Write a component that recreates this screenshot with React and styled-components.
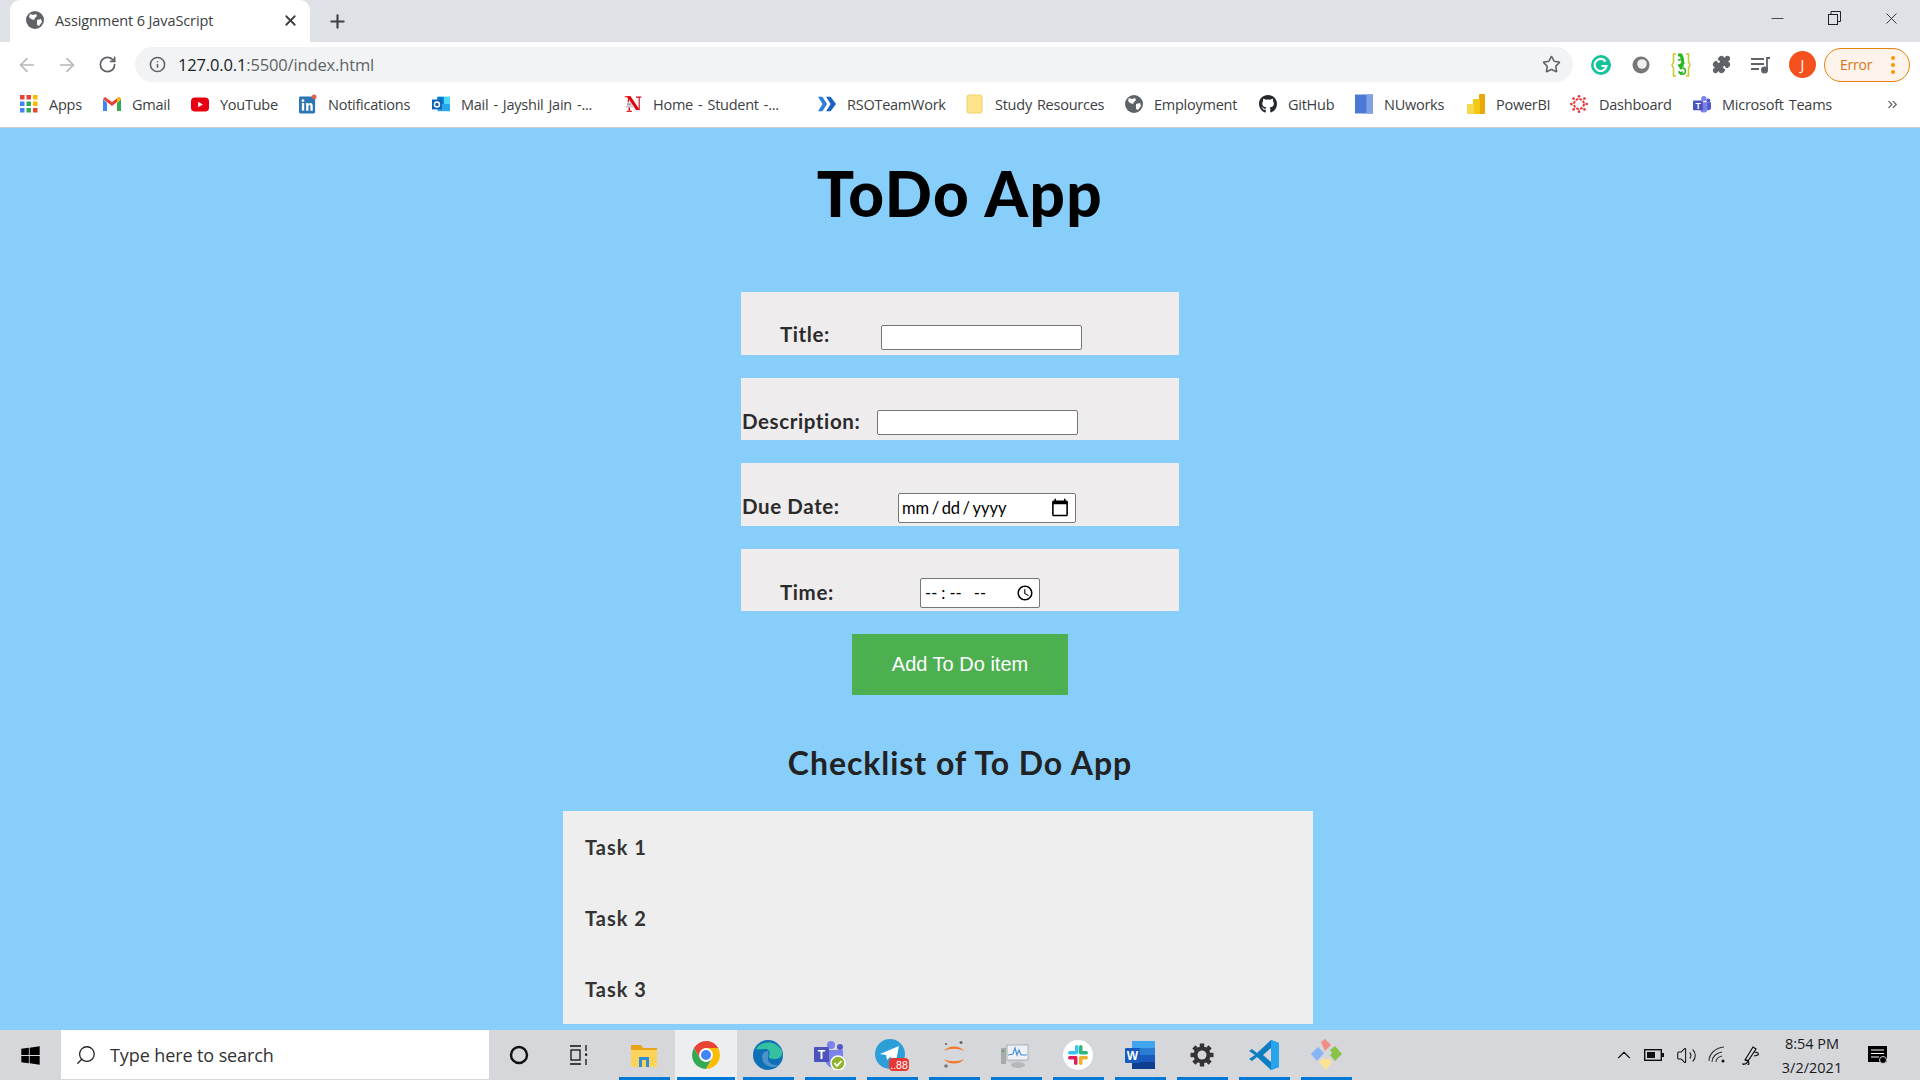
import React from "react";
import styled, { createGlobalStyle } from "styled-components";
import { ArrowLeft, ArrowRight, RotateCw, Info, Star, Puzzle, X, Plus, Minus, Search, ChevronUp, Volume2, ChevronsRight } from "lucide-react";
import { FaGithub, FaWindows } from "react-icons/fa";

const GlobalStyle = createGlobalStyle`
  html, body { margin: 0; height: 100%; overflow: hidden; }
  body { font-family: "Open Sans", "Liberation Sans", sans-serif; background: #87cefa; }
  * { box-sizing: border-box; }
`;

const COMIC = `"Lato", "Open Sans", sans-serif`;

const Screen = styled.div`
  display: flex;
  flex-direction: column;
  width: 1920px;
  height: 1080px;
  overflow: hidden;
`;

/* browser chrome */
const TabStrip = styled.div`
  display: flex;
  align-items: center;
  height: 42px;
  padding-left: 10px;
  background: #dee1e6;
  flex: none;
`;

const Tab = styled.div`
  display: flex;
  align-items: center;
  width: 300px;
  height: 42px;
  padding: 0 11px 2px 16px;
  background: #fff;
  border-radius: 10px 10px 0 0;
  font-family: "Open Sans", sans-serif;
  font-size: 14.5px;
  letter-spacing: -0.1px;
  color: #3c4043;
`;

const TabTitle = styled.span`
  flex: 1;
  margin-left: 11px;
`;

const NewTab = styled.div`
  display: flex;
  margin-left: 17px;
  color: #3c4043;
`;

const WindowControls = styled.div`
  display: flex;
  margin-left: auto;
  align-self: flex-start;
  height: 36px;
  color: #202124;
`;

const WindowButton = styled.div`
  display: flex;
  align-items: center;
  justify-content: center;
  width: 57px;
`;

const Toolbar = styled.div`
  display: flex;
  align-items: center;
  height: 40px;
  padding-top: 5px;
  background: #fff;
  flex: none;
`;

const NavButton = styled.div`
  display: flex;
  justify-content: center;
  width: 40px;
  margin-left: ${(p) => (p.$first ? "7px" : "0")};
  color: ${(p) => (p.$dim ? "#b4b7bb" : "#5f6368")};
`;

const AddressBar = styled.div`
  display: flex;
  align-items: center;
  flex: 1;
  height: 35px;
  margin-left: 8px;
  padding: 0 12px 0 14px;
  background: #f1f3f4;
  border-radius: 18px;
  color: #5f6368;
`;

const Url = styled.div`
  flex: 1;
  margin-left: 12px;
  font-family: "Open Sans", sans-serif;
  font-size: 16.5px;
  letter-spacing: -0.15px;
  color: #5f6368;
  b { font-weight: 400; color: #202124; }
`;

const ExtensionRow = styled.div`
  display: flex;
  align-items: center;
  margin-left: 8px;
  margin-right: 10px;
`;

const Extension = styled.div`
  display: flex;
  align-items: center;
  justify-content: center;
  width: 40px;
  color: #5f6368;
`;

const Avatar = styled.div`
  display: flex;
  align-items: center;
  justify-content: center;
  width: 27px;
  height: 27px;
  margin: 0 6px 0 8px;
  border-radius: 50%;
  background: #f4511e;
  color: #fff;
  font-size: 14px;
`;

const ErrorPill = styled.div`
  display: flex;
  align-items: center;
  justify-content: space-between;
  width: 86px;
  height: 34px;
  margin-left: 2px;
  padding: 0 14px 0 15px;
  border: 1.5px solid #e8810f;
  border-radius: 17px;
  background: #fdf3ea;
  color: #d9731a;
  font-family: "Open Sans", sans-serif;
  font-size: 14px;
  letter-spacing: -0.2px;
`;

const PillDots = styled.span`
  display: flex;
  flex-direction: column;
  gap: 3px;
  i { width: 4px; height: 4px; border-radius: 50%; background: #f29900; }
`;

const BookmarkBar = styled.div`
  display: flex;
  align-items: center;
  height: 46px;
  padding: 0 0 1px 20px;
  background: #fff;
  border-bottom: 1px solid #c9ced3;
  flex: none;
`;

const Bookmark = styled.div`
  display: flex;
  align-items: center;
  gap: 11px;
  flex: none;
  width: ${(p) => p.$w}px;
  font-family: "Open Sans", sans-serif;
  font-size: 14.5px;
  letter-spacing: -0.25px;
  word-spacing: 1.5px;
  color: #3c4043;
  white-space: nowrap;
`;

const BookmarkIcon = styled.span`
  display: flex;
  align-items: center;
  justify-content: center;
  width: 18px;
  height: 20px;
  flex: none;
`;

const More = styled.div`
  display: flex;
  margin-left: auto;
  margin-right: 20px;
  color: #5f6368;
`;

/* page */
const Page = styled.main`
  display: flex;
  flex-direction: column;
  align-items: center;
  flex: 1;
  min-height: 0;
  padding-top: 25px;
  background: #87cefa;
  overflow: hidden;
  font-family: ${COMIC};
`;

const Title = styled.h1`
  margin: 0 0 59px;
  height: 80px;
  font-size: 62px;
  line-height: 80px;
  font-weight: 900;
  letter-spacing: 1.5px;
  color: #000;
`;

const Form = styled.form`
  display: flex;
  flex-direction: column;
  align-items: center;
  gap: 23px;
`;

const FormRow = styled.div`
  display: flex;
  align-items: flex-end;
  width: 438px;
  height: ${(p) => p.$h}px;
  padding-bottom: ${(p) => p.$pad}px;
  background: #eeeced;
`;

const Label = styled.label`
  flex: none;
  width: ${(p) => p.$w}px;
  margin-left: ${(p) => p.$left}px;
  padding-bottom: ${(p) => p.$lift}px;
  font-size: 20.5px;
  line-height: 28px;
  font-weight: 700;
  letter-spacing: 0.6px;
  color: #2b2b2b;
`;

const TextInput = styled.input`
  width: 201px;
  height: 25px;
  padding: 1px 2px;
  background: #fff;
  border: 1px solid #767676;
  border-radius: 2px;
`;

const PickerInput = styled.input`
  width: ${(p) => p.$w}px;
  height: 30px;
  padding: 1px 2px;
  background: #fff;
  border: 1px solid #767676;
  border-radius: 2px;
  font-family: "Lato", sans-serif;
  font-size: 16.5px;
  color: #000;
  &::-webkit-datetime-edit { letter-spacing: ${(p) => p.$spacing}px; padding-left: ${(p) => p.$inset}px; }
  &::-webkit-datetime-edit-text { padding: 0 ${(p) => p.$sep}px; }
  &::-webkit-calendar-picker-indicator { width: ${(p) => p.$icon}px; height: ${(p) => p.$icon}px; margin: 0 ${(p) => p.$iconGap}px 0 0; padding: 0; }
`;

const AddButton = styled.button`
  width: 216px;
  height: 61px;
  padding: 0;
  background: #4caf50;
  border: 0;
  color: #fff;
  font-family: "Liberation Sans", sans-serif;
  font-size: 20px;
`;

const SubTitle = styled.h2`
  margin: 48px 0 28px;
  height: 40px;
  font-size: 32px;
  line-height: 40px;
  font-weight: 700;
  letter-spacing: 0.95px;
  color: #222;
`;

const TaskPanel = styled.ul`
  display: flex;
  flex-direction: column;
  align-self: flex-start;
  width: 750px;
  height: 213px;
  margin: 0 0 0 563px;
  padding: 0;
  list-style: none;
  background: #eee;
`;

const TaskItem = styled.li`
  display: flex;
  align-items: center;
  height: 71px;
  padding-left: 22px;
  font-size: 20px;
  font-weight: 700;
  letter-spacing: 1px;
  color: #333;
`;

/* taskbar */
const Taskbar = styled.footer`
  display: flex;
  align-items: stretch;
  height: 50px;
  background: #d5d7db;
  flex: none;
`;

const StartButton = styled.div`
  display: flex;
  align-items: center;
  justify-content: center;
  width: 61px;
  color: #000;
`;

const SearchBox = styled.div`
  display: flex;
  align-items: center;
  gap: 13px;
  width: 428px;
  padding-left: 14px;
  background: #fff;
  border-bottom: 1px solid #d5d7db;
  font-family: "Open Sans", sans-serif;
  font-size: 18px;
  letter-spacing: -0.1px;
  color: #333;
`;

const SystemButton = styled.div`
  display: flex;
  align-items: center;
  justify-content: center;
  width: 60px;
  color: #111;
`;

const Apps = styled.div`
  display: flex;
  margin-left: 4px;
`;

const AppCell = styled.div`
  position: relative;
  display: flex;
  align-items: center;
  justify-content: center;
  width: 62px;
  background: ${(p) => (p.$active ? "#eceef0" : "transparent")};
  &::after {
    content: "";
    position: absolute;
    left: ${(p) => (p.$active ? "2px" : "5.5px")};
    right: ${(p) => (p.$active ? "2px" : "5.5px")};
    bottom: 0;
    height: 3px;
    background: #0078d7;
  }
`;

const Tray = styled.div`
  display: flex;
  align-items: center;
  margin-left: auto;
  color: #111;
`;

const TrayIcon = styled.div`
  display: flex;
  align-items: center;
  justify-content: center;
  width: ${(p) => p.$w || 32}px;
`;

const Clock = styled.div`
  display: flex;
  flex-direction: column;
  align-items: center;
  gap: 5px;
  width: 92px;
  font-family: "Open Sans", sans-serif;
  font-size: 14.5px;
  line-height: 19px;
  color: #1a1a1a;
`;

const NotifyButton = styled.div`
  display: flex;
  align-items: center;
  justify-content: center;
  width: 40px;
  margin-right: 22px;
`;

/* icons */
const Globe = ({ size = 18 }) => (
  <svg width={size} height={size} viewBox="0 0 18 18">
    <circle cx="9" cy="9" r="9" fill="#5f6368" />
    <path d="M4 3l3 1 3-1 1 2-2 2-1 2-3-1-2-2zM11 9l4-1 1 3-3 4-2-1z" fill="#fff" />
  </svg>
);

const AppsGrid = () => {
  const colors = ["#ea4335", "#ea4335", "#fbbc04", "#4285f4", "#34a853", "#fbbc04", "#4285f4", "#34a853", "#ea4335"];
  return (
    <svg width="18" height="18" viewBox="0 0 18 18">
      {colors.map((c, i) => (
        <rect key={i} x={(i % 3) * 6.5} y={Math.floor(i / 3) * 6.5} width="4.5" height="4.5" fill={c} />
      ))}
    </svg>
  );
};

const Gmail = () => (
  <svg width="18" height="14" viewBox="0 0 18 14">
    <path d="M0 2v12h4V6z" fill="#4285f4" />
    <path d="M14 6v8h4V2z" fill="#34a853" />
    <path d="M0 2l9 7 9-7-2-2-7 5-7-5z" fill="#ea4335" />
    <path d="M14 6l4-4-2-2-2 1.500z" fill="#fbbc04" />
  </svg>
);

const YouTube = () => (
  <svg width="19" height="15" viewBox="0 0 19 15">
    <rect width="19" height="15" rx="4" fill="#e60012" />
    <path d="M7.500 4.500l5 3-5 3z" fill="#fff" />
  </svg>
);

const LinkedIn = () => (
  <svg width="19" height="20" viewBox="0 0 19 20">
    <rect y="2" width="17" height="18" rx="1.500" fill="#2b77b5" />
    <rect x="3" y="9" width="2.500" height="8" fill="#fff" />
    <circle cx="4.200" cy="6.500" r="1.500" fill="#fff" />
    <path d="M7.500 9H10v1.200c1.500-2 4.500-1.500 4.500 1.800v5H12v-4.500c0-1.800-2-1.800-2 0V17H7.500z" fill="#fff" />
    <circle cx="16" cy="2.500" r="2.500" fill="#ea5a4a" />
  </svg>
);

const Outlook = () => (
  <svg width="20" height="18" viewBox="0 0 20 18">
    <rect x="6" y="1" width="14" height="16" fill="#28a8ea" />
    <rect x="13" y="1" width="7" height="8" fill="#50d9ff" />
    <rect x="6" y="1" width="7" height="8" fill="#0078d4" />
    <rect y="4" width="11" height="11" fill="#0f64b8" />
    <circle cx="5.500" cy="9.500" r="2.800" fill="none" stroke="#fff" strokeWidth="1.600" />
  </svg>
);

const Northeastern = () => (
  <svg width="24" height="24" viewBox="0 0 24 24">
    <path d="M4 2h5l12 18h-5z" fill="#e3000f" />
    <path d="M1 1.500h8v1.500H1zM16 2h7v1.500h-7zM19.500 2H21v18h-1.500z" fill="#e3000f" />
    <path d="M5 2h1.500v8H5z" fill="#e3000f" />
    <path d="M4 11h6v3H4z" fill="#a5a5a5" />
    <path d="M2 15h10v1.500H2z" fill="#b5b5b5" />
    <path d="M6 16.500h2V21H6z" fill="#e3000f" />
    <path d="M3.500 21h7v1.500h-7z" fill="#e3000f" />
  </svg>
);

const Rso = () => (
  <svg width="20" height="16" viewBox="0 0 20 16">
    <path d="M0 0h5l5 8-5 8H0l5-8z" fill="#2f7ed8" />
    <path d="M9 0h5l6 8-6 8H9l5-8z" fill="#1c62c4" />
  </svg>
);

const Folder = () => (
  <svg width="18" height="20" viewBox="0 0 18 20">
    <rect x="1" y="1" width="15" height="18" rx="1.500" fill="#fde48a" stroke="#f0d070" />
  </svg>
);

const NuWorks = () => (
  <svg width="19" height="20" viewBox="0 0 19 20">
    <rect width="19" height="20" fill="#4a78d4" />
    <rect x="12" width="7" height="20" fill="#7fa0e4" />
  </svg>
);

const PowerBi = () => (
  <svg width="18" height="20" viewBox="0 0 18 20">
    <rect x="12" width="6" height="20" rx="1" fill="#e8a80c" />
    <rect x="6" y="5" width="7" height="15" rx="1" fill="#f2c811" />
    <rect y="10" width="7" height="10" rx="1" fill="#f7d94c" />
  </svg>
);

const Canvas = () => {
  const dots = [0, 45, 90, 135, 180, 225, 270, 315];
  return (
    <svg width="20" height="20" viewBox="-10 -10 20 20">
      <circle r="5.500" fill="none" stroke="#e5383b" strokeWidth="2.200" strokeDasharray="3 1.300" />
      {dots.map((d) => (
        <circle key={d} r="1.500" fill="#e5383b" cx={8.500 * Math.cos((d * Math.PI) / 180)} cy={8.500 * Math.sin((d * Math.PI) / 180)} />
      ))}
    </svg>
  );
};

const Teams = ({ size = 20 }) => (
  <svg width={size} height={size} viewBox="0 0 20 20">
    <circle cx="12" cy="4" r="3" fill="#7b83eb" />
    <circle cx="17" cy="6" r="2.200" fill="#5059c9" />
    <path d="M14 8h6v6a3 3 0 0 1-6 0z" fill="#5059c9" />
    <path d="M7 8h9v7a4 4 0 0 1-8 1z" fill="#7b83eb" />
    <rect y="6" width="11" height="11" rx="1" fill="#4b53bc" />
    <text x="5.500" y="15" fontSize="9.500" fontWeight="700" textAnchor="middle" fill="#fff" fontFamily="Liberation Sans">T</text>
  </svg>
);

const Grammarly = () => (
  <svg width="20" height="20" viewBox="0 0 20 20">
    <circle cx="10" cy="10" r="10" fill="#15c39a" />
    <path d="M14.500 6.500A6 6 0 1 0 15.500 11H10.500" fill="none" stroke="#fff" strokeWidth="2.200" />
  </svg>
);

const Orb = () => (
  <svg width="18" height="18" viewBox="0 0 18 18">
    <circle cx="9" cy="9" r="8.500" fill="#777" />
    <circle cx="10" cy="8" r="4.800" fill="#efefef" />
  </svg>
);

const Gecko = () => (
  <svg width="20" height="24" viewBox="0 0 20 24">
    <path d="M5 1H2.500v8L1 12l1.500 3v8H5M15 1h2.500v8L19 12l-1.500 3v8H15" fill="none" stroke="#c7cc2d" strokeWidth="1.600" />
    <path d="M7 2l3 0 1 3 1 5 -3 3 2 3" fill="none" stroke="#24b81a" strokeWidth="3" />
    <path d="M7 7l6-1M7 12l6 1" fill="none" stroke="#24b81a" strokeWidth="1.400" />
    <path d="M12 15a3.200 3.200 0 1 1-4 3c0 2 3 2.500 3.500 0.500" fill="none" stroke="#24b81a" strokeWidth="1.500" />
  </svg>
);

const MediaQueue = () => (
  <svg width="20" height="18" viewBox="0 0 20 18" fill="none" stroke="#5f6368" strokeWidth="1.800">
    <path d="M0 3h13M0 8h13M0 13h8" />
    <path d="M16 14V2h3" />
    <circle cx="13.500" cy="14" r="2.600" fill="#5f6368" />
  </svg>
);

const Restore = () => (
  <svg width="13" height="14" viewBox="0 0 13 14" fill="none" stroke="#202124" strokeWidth="1">
    <rect x="0.500" y="3.500" width="9" height="10" />
    <path d="M3 3V0.500h9.500v10H10" />
  </svg>
);

const TaskView = () => (
  <svg width="20" height="20" viewBox="0 0 20 20" fill="none" stroke="#111" strokeWidth="1.300">
    <path d="M1 1h11M1 19h11M17 0v6M17 14v6" />
    <rect x="2" y="5" width="9" height="10" />
    <rect x="16" y="8.500" width="2.200" height="2.200" fill="#111" stroke="none" />
  </svg>
);

const Explorer = () => (
  <svg width="28" height="26" viewBox="0 0 28 26">
    <path d="M1 3h10l2 3h14v6H1z" fill="#e8a317" />
    <rect x="1" y="8" width="26" height="17" fill="#fbd25b" />
    <rect x="9" y="15" width="10" height="10" fill="#2a8fd8" />
    <rect x="12" y="18" width="4" height="7" fill="#fbd25b" />
  </svg>
);

const Chrome = () => (
  <svg width="28" height="28" viewBox="-14 -14 28 28">
    <path d="M0-14A14 14 0 0 1 12.100-7H0z" fill="#ea4335" />
    <path d="M-12.100-7A14 14 0 0 1 12.100-7L0-7A7 7 0 0 0-6 3.500z" fill="#ea4335" />
    <path d="M-12.100-7L-6 3.500A7 7 0 0 0 6 3.500L0 14A14 14 0 0 1-12.100-7z" fill="#34a853" />
    <path d="M12.100-7A14 14 0 0 1 0 14L6 3.500A7 7 0 0 0 0-7z" fill="#fbbc04" />
    <circle r="6.500" fill="#fff" />
    <circle r="5" fill="#4285f4" />
  </svg>
);

const Edge = () => (
  <svg width="30" height="30" viewBox="0 0 30 30">
    <circle cx="15" cy="15" r="15" fill="#0f70b7" />
    <path d="M3 9C7 1 23-1 29 11c1 6-3 8-8 8-3 0-6-1-5-3 2-3 0-7-4-7-4 0-7 1-9 0z" fill="#35c1a0" />
    <path d="M15 11c-5 0-8 6-4 12 4 5 12 5 15 2-6 1-12-2-11-7 0-3 1-5 0-7z" fill="#fff" opacity="0.250" />
  </svg>
);

const TeamsBadge = () => (
  <svg width="32" height="30" viewBox="0 0 32 30">
    <circle cx="17" cy="5" r="4" fill="#7b83eb" />
    <circle cx="26" cy="7" r="3" fill="#5059c9" />
    <path d="M11 10h18v8a9 9 0 0 1-18 2z" fill="#7b83eb" />
    <rect y="7" width="15" height="15" rx="1" fill="#4b53bc" />
    <text x="7.500" y="19" fontSize="12" fontWeight="700" textAnchor="middle" fill="#fff" fontFamily="Liberation Sans">T</text>
    <circle cx="24" cy="23" r="7" fill="#8fb52a" stroke="#fff" strokeWidth="1.500" />
    <path d="M20.500 23l2.500 3 4.500-5" fill="none" stroke="#fff" strokeWidth="1.800" />
  </svg>
);

const Telegram = () => (
  <svg width="34" height="32" viewBox="0 0 34 32">
    <circle cx="15" cy="15" r="15" fill="#2c9fd9" />
    <path d="M5 15L24 7l-3 15-6-4-3 3-1-5z" fill="#fff" />
    <rect x="14" y="19" width="20" height="13" rx="4" fill="#e53935" />
    <text x="24" y="29.500" fontSize="10.500" textAnchor="middle" fill="#fff" fontFamily="Liberation Sans">..88</text>
  </svg>
);

const Jupyter = () => (
  <svg width="24" height="30" viewBox="0 0 24 30">
    <path d="M2 11c4-6 16-6 20 0-5-3-15-3-20 0zM2 19c4 6 16 6 20 0-5 3-15 3-20 0z" fill="#f37726" />
    <circle cx="19" cy="2.500" r="1.500" fill="#666" />
    <circle cx="4" cy="26" r="1.800" fill="#777" />
    <circle cx="4" cy="4" r="1" fill="#555" />
  </svg>
);

const MonitorApp = () => (
  <svg width="30" height="30" viewBox="0 0 30 30">
    <path d="M3 6l24-3v18L8 23z" fill="#c9cbce" />
    <rect x="6" y="5" width="21" height="15" fill="#eef1f5" stroke="#b0b2b5" />
    <path d="M7 15l5-1 2-6 2 7 2-5 2 5h6" fill="none" stroke="#4a90d9" strokeWidth="1.200" />
    <ellipse cx="17" cy="25" rx="7" ry="3" fill="#b5b7ba" />
    <rect y="8" width="5" height="16" fill="#a8aaad" />
    <rect x="1" y="10" width="2" height="2" fill="#4caf50" />
  </svg>
);

const Slack = () => (
  <svg width="30" height="30" viewBox="0 0 30 30">
    <circle cx="15" cy="15" r="15" fill="#fff" />
    <rect x="12" y="5" width="3.500" height="9" rx="1.700" fill="#36c5f0" />
    <rect x="5" y="11" width="9" height="3.500" rx="1.700" fill="#36c5f0" />
    <rect x="16" y="5" width="3.500" height="9" rx="1.700" fill="#2eb67d" />
    <rect x="16" y="11" width="9" height="3.500" rx="1.700" fill="#2eb67d" />
    <rect x="16" y="16" width="9" height="3.500" rx="1.700" fill="#ecb22e" />
    <rect x="16" y="16" width="3.500" height="9" rx="1.700" fill="#ecb22e" />
    <rect x="5" y="16" width="9" height="3.500" rx="1.700" fill="#e01e5a" />
    <rect x="11" y="16" width="3.500" height="9" rx="1.700" fill="#e01e5a" />
  </svg>
);

const Word = () => (
  <svg width="30" height="28" viewBox="0 0 30 28">
    <rect x="7" width="23" height="28" rx="1" fill="#2b7cd3" />
    <rect x="7" width="23" height="7" fill="#41a5ee" />
    <rect x="7" y="14" width="23" height="7" fill="#185abd" />
    <rect x="7" y="21" width="23" height="7" fill="#103f91" />
    <rect y="7" width="15" height="15" rx="1" fill="#185abd" />
    <text x="7.500" y="19" fontSize="12" fontWeight="700" textAnchor="middle" fill="#fff" fontFamily="Liberation Sans">W</text>
  </svg>
);

const Gear = () => (
  <svg width="24" height="24" viewBox="-12 -12 24 24">
    {[0, 45, 90, 135].map((r) => (
      <rect key={r} x="-2.200" y="-11.500" width="4.400" height="23" fill="#333" transform={`rotate(${r})`} />
    ))}
    <circle r="8.500" fill="#333" />
    <circle r="4.500" fill="#d5d7db" />
  </svg>
);

const VsCode = () => (
  <svg width="30" height="30" viewBox="0 0 30 30">
    <path d="M22 0l8 3v24l-8 3L8 17l-5 4-3-2 6-4-6-4 3-2 5 4z" fill="#0f7dc2" />
    <path d="M22 0l8 3v24l-8 3z" fill="#27a4ec" />
    <path d="M22 8v14l-8-7z" fill="#d5d7db" />
  </svg>
);

const GitKraken = () => (
  <svg width="32" height="32" viewBox="0 0 32 32">
    <path d="M1 15l7-7 6 6-7 8z" fill="#8ab4f8" />
    <path d="M11 3l4-3 6 6-3 3-3 3z" fill="#f28b82" />
    <path d="M20 11l5-4 7 8-7 7-5-6 2-2z" fill="#8bc34a" />
    <path d="M9 23l4-4c1 2 4 2 5 0l4 4-6 8z" fill="#fde293" />
  </svg>
);

const Battery = () => (
  <svg width="20" height="12" viewBox="0 0 20 12">
    <rect x="0.700" y="0.700" width="16.600" height="10.600" fill="none" stroke="#111" strokeWidth="1.400" />
    <rect x="3" y="3" width="8" height="6" fill="#111" />
    <rect x="18" y="4" width="2" height="4" fill="#111" />
  </svg>
);

const Wifi = () => (
  <svg width="20" height="18" viewBox="0 0 20 18" fill="none" stroke="#333" strokeWidth="1.100">
    <path d="M1 15C1 8 7 2 16 1M4 16c0-5 4-9 10-10M8 16c0-3 2-5 6-6" />
    <circle cx="15" cy="15" r="1.500" fill="#111" stroke="none" />
  </svg>
);

const Pen = () => (
  <svg width="20" height="20" viewBox="0 0 20 20" fill="none" stroke="#111" strokeWidth="1.200">
    <path d="M5 15L13 2l3 2-8 12z" />
    <path d="M5 15a3 3 0 1 1-2 4c3 1 4-1 5-3M14 7c3 0 5 1 4 3l-4 1" />
  </svg>
);

const Notify = () => (
  <svg width="20" height="19" viewBox="0 0 20 19">
    <rect width="19" height="16" fill="#000" />
    <path d="M3 4h13M3 7.500h13M3 11h8" stroke="#fff" strokeWidth="1" />
    <circle cx="15" cy="14" r="3.500" fill="#000" stroke="#d5d7db" strokeWidth="1" />
  </svg>
);

const bookmarks = [
  { label: "Apps", w: 83, icon: <AppsGrid /> },
  { label: "Gmail", w: 88, icon: <Gmail /> },
  { label: "YouTube", w: 108, icon: <YouTube /> },
  { label: "Notifications", w: 133, icon: <LinkedIn /> },
  { label: "Mail - Jayshil Jain -...", w: 192, icon: <Outlook /> },
  { label: "Home - Student -...", w: 194, icon: <Northeastern /> },
  { label: "RSOTeamWork", w: 148, icon: <Rso /> },
  { label: "Study Resources", w: 159, icon: <Folder /> },
  { label: "Employment", w: 134, icon: <Globe /> },
  { label: "GitHub", w: 96, icon: <FaGithub size={20} color="#24292e" /> },
  { label: "NUworks", w: 112, icon: <NuWorks /> },
  { label: "PowerBI", w: 103, icon: <PowerBi /> },
  { label: "Dashboard", w: 123, icon: <Canvas /> },
  { label: "Microsoft Teams", w: 170, icon: <Teams /> },
];

const taskbarApps = [
  { id: "explorer", icon: <Explorer /> },
  { id: "chrome", icon: <Chrome />, active: true },
  { id: "edge", icon: <Edge /> },
  { id: "teams", icon: <TeamsBadge /> },
  { id: "telegram", icon: <Telegram /> },
  { id: "jupyter", icon: <Jupyter /> },
  { id: "monitor", icon: <MonitorApp /> },
  { id: "slack", icon: <Slack /> },
  { id: "word", icon: <Word /> },
  { id: "settings", icon: <Gear /> },
  { id: "vscode", icon: <VsCode /> },
  { id: "gitkraken", icon: <GitKraken /> },
];

const App = () => (
  <Screen>
    <GlobalStyle />
    <TabStrip>
      <Tab>
        <Globe />
        <TabTitle>Assignment 6 JavaScript</TabTitle>
        <X size={17} strokeWidth={2.5} color="#3c4043" />
      </Tab>
      <NewTab>
        <Plus size={21} strokeWidth={2.4} />
      </NewTab>
      <WindowControls>
        <WindowButton><Minus size={19} strokeWidth={1} /></WindowButton>
        <WindowButton><Restore /></WindowButton>
        <WindowButton><X size={19} strokeWidth={1.1} /></WindowButton>
      </WindowControls>
    </TabStrip>

    <Toolbar>
      <NavButton $first $dim><ArrowLeft size={22} strokeWidth={1.8} /></NavButton>
      <NavButton $dim><ArrowRight size={22} strokeWidth={1.8} /></NavButton>
      <NavButton><RotateCw size={19} strokeWidth={2.2} /></NavButton>
      <AddressBar>
        <Info size={17} strokeWidth={2.2} />
        <Url><b>127.0.0.1</b>:5500/index.html</Url>
        <Star size={19} strokeWidth={2} color="#5f6368" />
      </AddressBar>
      <ExtensionRow>
        <Extension><Grammarly /></Extension>
        <Extension><Orb /></Extension>
        <Extension><Gecko /></Extension>
        <Extension><Puzzle size={19} fill="#5f6368" /></Extension>
        <Extension><MediaQueue /></Extension>
        <Avatar>J</Avatar>
        <ErrorPill>
          Error
          <PillDots><i /><i /><i /></PillDots>
        </ErrorPill>
      </ExtensionRow>
    </Toolbar>

    <BookmarkBar>
      {bookmarks.map((b) => (
        <Bookmark key={b.label} $w={b.w}>
          <BookmarkIcon>{b.icon}</BookmarkIcon>
          {b.label}
        </Bookmark>
      ))}
      <More><ChevronsRight size={15} strokeWidth={2} /></More>
    </BookmarkBar>

    <Page>
      <Title>ToDo App</Title>
      <Form>
        <FormRow $h={63} $pad={5}>
          <Label $left={39} $w={101} $lift={2} htmlFor="title">Title:</Label>
          <TextInput id="title" type="text" />
        </FormRow>
        <FormRow $h={62} $pad={5}>
          <Label $left={1} $w={135} $lift={0} htmlFor="description">Description:</Label>
          <TextInput id="description" type="text" />
        </FormRow>
        <FormRow $h={63} $pad={3}>
          <Label $left={1} $w={156} $lift={3} htmlFor="due">Due Date:</Label>
          <PickerInput id="due" type="date" $w={178} $spacing={0} $inset={0} $sep={1.5} $icon={20} $iconGap={3} />
        </FormRow>
        <FormRow $h={62} $pad={3}>
          <Label $left={39} $w={140} $lift={2} htmlFor="time">Time:</Label>
          <PickerInput id="time" type="time" $w={120} $spacing={3.4} $inset={1} $sep={3} $icon={18} $iconGap={3} />
        </FormRow>
        <AddButton type="button">Add To Do item</AddButton>
      </Form>
      <SubTitle>Checklist of To Do App</SubTitle>
      <TaskPanel>
        <TaskItem>Task 1</TaskItem>
        <TaskItem>Task 2</TaskItem>
        <TaskItem>Task 3</TaskItem>
      </TaskPanel>
    </Page>

    <Taskbar>
      <StartButton><FaWindows size={21} /></StartButton>
      <SearchBox>
        <Search size={22} strokeWidth={1.4} transform="scale(-1 1)" color="#222" />
        Type here to search
      </SearchBox>
      <SystemButton>
        <svg width="20" height="20" viewBox="0 0 20 20"><circle cx="10" cy="10" r="8" fill="none" stroke="#111" strokeWidth="2.400" /></svg>
      </SystemButton>
      <SystemButton><TaskView /></SystemButton>
      <Apps>
        {taskbarApps.map((a) => (
          <AppCell key={a.id} $active={a.active}>{a.icon}</AppCell>
        ))}
      </Apps>
      <Tray>
        <TrayIcon $w={28}><ChevronUp size={22} strokeWidth={1.2} /></TrayIcon>
        <TrayIcon><Battery /></TrayIcon>
        <TrayIcon><Volume2 size={21} strokeWidth={1.2} /></TrayIcon>
        <TrayIcon><Wifi /></TrayIcon>
        <TrayIcon><Pen /></TrayIcon>
        <Clock>
          <span>8:54 PM</span>
          <span>3/2/2021</span>
        </Clock>
        <NotifyButton><Notify /></NotifyButton>
      </Tray>
    </Taskbar>
  </Screen>
);

export default App;
